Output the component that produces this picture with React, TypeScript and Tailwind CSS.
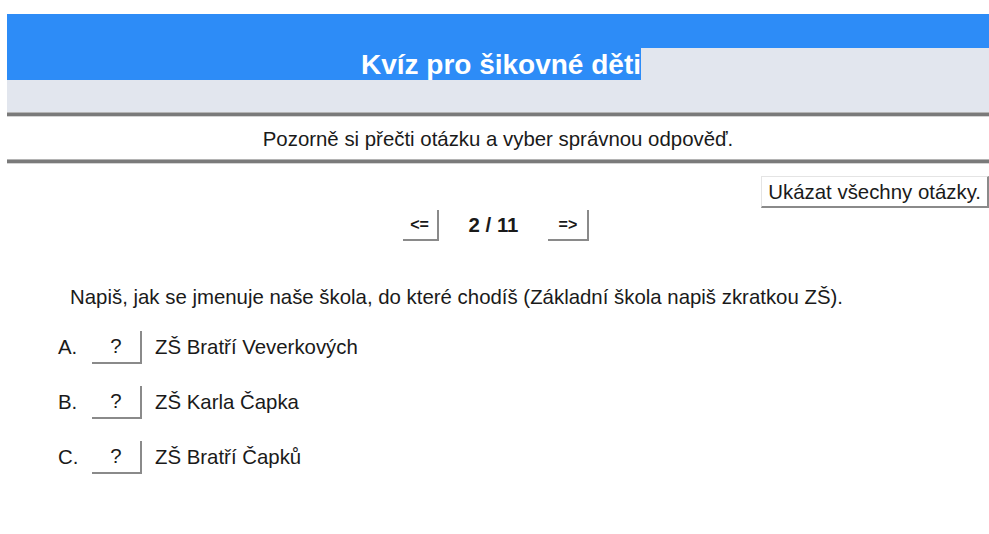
import React from 'react';

const options = [
  { letter: 'A.', text: 'ZŠ Bratří Veverkových' },
  { letter: 'B.', text: 'ZŠ Karla Čapka' },
  { letter: 'C.', text: 'ZŠ Bratří Čapků' },
];

const Rule = () => (
  <div className="h-[5px] border-t border-[#b4b4b4] bg-[#7a7a7a] border-b border-b-[#d4d4d4]" />
);

const App = () => {
  return (
    <div className="min-h-screen bg-white pl-[7px] pt-[14px] font-['Liberation_Sans',Arial,sans-serif] text-[20.4px] text-[#1a1a1a]">
      {/* header band */}
      <div className="h-[34px] bg-[#2d8cf7]" />
      <div className="flex h-[32px]">
        <div className="flex w-[634px] items-end justify-end bg-[#2d8cf7]">
          <h1 className="text-[28px] font-bold leading-[31px] text-white">Kvíz pro šikovné děti</h1>
        </div>
        <div className="flex-1 bg-[#e2e6ee]" />
      </div>
      <div className="h-[32px] bg-[#e2e6ee]" />
      <Rule />

      <p className="flex h-[42px] items-center justify-center pt-[2px]">
        Pozorně si přečti otázku a vyber správnou odpověď.
      </p>
      <Rule />

      <div className="mt-[12px] flex justify-end">
        <button className="h-[32px] border-t border-l border-[#e4e4e4] border-r-2 border-b-2 border-r-[#8a8a8a] border-b-[#8a8a8a] bg-white px-[6px]">
          Ukázat všechny otázky.
        </button>
      </div>

      {/* navigation */}
      <div className="mt-[2px] flex items-center justify-center gap-[30px] pr-[4px]">
        <button className="h-[31px] w-[36px] border-r-2 border-b-2 border-[#8a8a8a] bg-white text-[16px] font-bold">
          &lt;=
        </button>
        <span className="font-bold">2 / 11</span>
        <button className="h-[31px] w-[41px] border-r-2 border-b-2 border-[#8a8a8a] bg-white text-[16px] font-bold">
          =&gt;
        </button>
      </div>

      <p className="mt-[41px] pl-[63px]">
        Napiš, jak se jmenuje naše škola, do které chodíš (Základní škola napiš zkratkou ZŠ).
      </p>

      <div className="mt-[18px] flex flex-col gap-[22px] pl-[51px]">
        {options.map((o) => (
          <div key={o.letter} className="flex items-center">
            <span className="w-[34px]">{o.letter}</span>
            <button className="h-[33px] w-[50px] border-r-2 border-b-2 border-[#8a8a8a] bg-white">?</button>
            <span className="ml-[13px]">{o.text}</span>
          </div>
        ))}
      </div>
    </div>
  );
};

export default App;
